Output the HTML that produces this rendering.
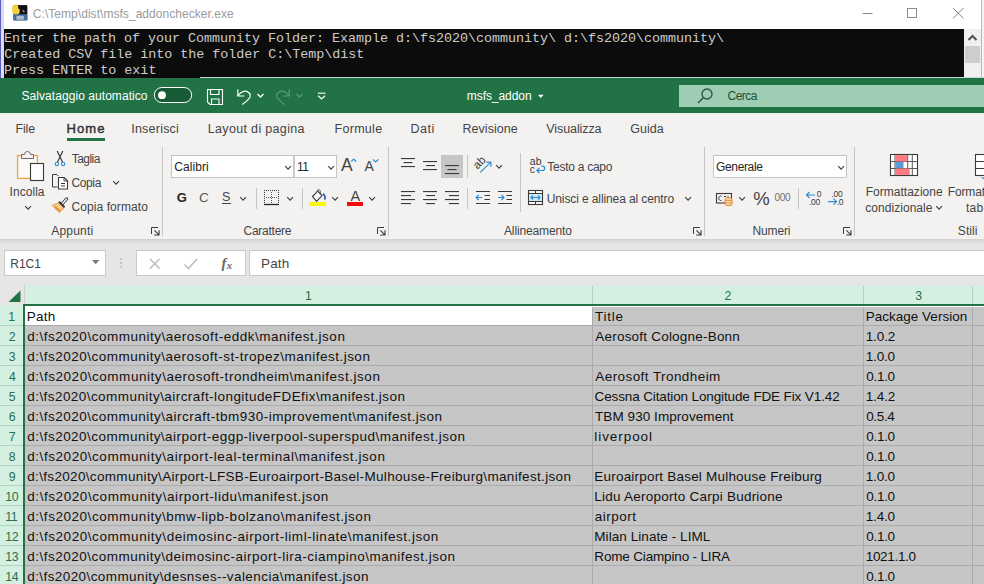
<!DOCTYPE html>
<html lang="it"><head><meta charset="utf-8"><title>msfs_addon - Excel</title>
<style>
html,body{margin:0;padding:0}
body{width:984px;height:584px;position:relative;overflow:hidden;background:#fff;font-family:"Liberation Sans",sans-serif}
.r{position:absolute;display:block}
.t{position:absolute;white-space:pre;line-height:40px;height:40px}
</style></head>
<body>
<div class="r" style="left:0px;top:0px;width:984px;height:29px;background:#ffffff;"></div>
<div class="r" style="left:0px;top:0px;width:1px;height:78px;background:#5c5eb6;"></div>
<div class="r" style="left:1px;top:0px;width:2px;height:78px;background:#dcdcfa;"></div>
<div class="r" style="left:3px;top:0px;width:1px;height:78px;background:#d6dada;"></div>
<svg class="r" style="left:12px;top:4px;" width="16" height="17" viewBox="0 0 16 17"><rect x="1.2" y="1.2" width="14.3" height="15.3" rx="1.2" fill="#3f6694"/>
<rect x="5" y="1.2" width="10" height="9" fill="#0f0f12"/>
<rect x="1.6" y="10.8" width="13.6" height="5.4" fill="#44709f"/>
<rect x="4.5" y="11.8" width="7.3" height="3.8" fill="#b4bccb"/>
<path d="M0.2 3.4q0-2.7 2.8-2.7h1.200q2.100 0 2.100 2.300v1.800h1.400v2.800q0 2.600-2.400 2.600h-2.300q-2.800 0-2.800-3z" fill="#f4cf3a"/>
<circle cx="7.6" cy="4.6" r="0.7" fill="#1c1c1c"/>
<rect x="10.3" y="5.8" width="1.2" height="1.2" fill="#9ab"/><rect x="11.3" y="7" width="1.2" height="1.3" fill="#cfd8e2"/></svg>
<span class="t" style="left:32.8px;top:-6px;font-size:12px;color:#9a9a9a;letter-spacing:0.045px;">C:\Temp\dist\msfs_addonchecker.exe</span>
<svg class="r" style="left:860px;top:6px;" width="110" height="16" viewBox="0 0 110 16"><path d="M2.5 7.500h10" stroke="#8a8a8a" stroke-width="1" fill="none"/>
<rect x="47.5" y="2.5" width="9" height="9" stroke="#8a8a8a" stroke-width="1" fill="none"/>
<path d="M93 2l10.5 10.500M103.5 2l-10.5 10.5" stroke="#8a8a8a" stroke-width="1" fill="none"/></svg>
<div class="r" style="left:4px;top:29px;width:960px;height:49px;background:#0c0c0c;"></div>
<span class="t" style="left:4.0px;top:19px;font-size:13.4px;color:#cccccc;font-family:'Liberation Mono', monospace;letter-spacing:-0.037px;">Enter the path of your Community Folder: Example d:\fs2020\community\ d:\fs2020\community\</span>
<span class="t" style="left:4.25px;top:35px;font-size:13.4px;color:#cccccc;font-family:'Liberation Mono', monospace;letter-spacing:-0.034px;">Created CSV file into the folder C:\Temp\dist</span>
<span class="t" style="left:4.0px;top:51px;font-size:13.4px;color:#cccccc;font-family:'Liberation Mono', monospace;letter-spacing:-0.014px;">Press ENTER to exit</span>
<div class="r" style="left:964px;top:29px;width:17px;height:49px;background:#f0f0f0;"></div>
<svg class="r" style="left:964px;top:29px;" width="17" height="17" viewBox="0 0 17 17"><path d="M4.5 11l4-4 4 4" stroke="#505050" stroke-width="2" fill="none"/></svg>
<div class="r" style="left:965px;top:46px;width:15px;height:17px;background:#cdcdcd;"></div>
<div class="r" style="left:981px;top:0px;width:1px;height:78px;background:#b8b8b8;"></div>
<div class="r" style="left:982px;top:0px;width:2px;height:78px;background:#f3f3f3;"></div>
<div class="r" style="left:0px;top:78px;width:984px;height:35px;background:#217346;"></div>
<div class="r" style="left:200px;top:77px;width:784px;height:1px;background:#c5d6cc;"></div>
<span class="t" style="left:21.5px;top:76px;font-size:12px;color:#ffffff;letter-spacing:0.06px;">Salvataggio automatico</span>
<svg class="r" style="left:153px;top:86px;" width="40" height="18" viewBox="0 0 40 18"><rect x="1.3" y="1.5" width="37.4" height="15" rx="7.5" fill="#185c37" stroke="#ffffff" stroke-width="1"/>
<circle cx="9" cy="9.2" r="3.9" fill="#ffffff"/></svg>
<svg class="r" style="left:206px;top:88px;" width="18" height="18" viewBox="0 0 18 18"><path d="M1.5 1.500h15v15h-12.500l-2.5-2.500z" fill="none" stroke="#fff" stroke-width="1.1"/>
<path d="M4.5 1.500v5h8.500v-5" fill="none" stroke="#fff" stroke-width="1.1"/>
<path d="M5.5 16.500v-5.500h7.500v5.5" fill="none" stroke="#fff" stroke-width="1.1"/></svg>
<svg class="r" style="left:236px;top:87px;" width="18" height="19" viewBox="0 0 18 19"><path d="M1.8 2.500v6.500h6.5" fill="none" stroke="#fff" stroke-width="1.2"/>
<path d="M2.2 8.600c3-4.5 8-5.8 11-2.6 2.7 3 0.3 6.5-7 11.5" fill="none" stroke="#fff" stroke-width="1.2"/></svg>
<svg class="r" style="left:256px;top:92px;" width="9" height="7" viewBox="0 0 9 7"><path d="M1.5 2l3 3 3-3" fill="none" stroke="#fff" stroke-width="1.3"/></svg>
<svg class="r" style="left:273px;top:87px;" width="18" height="19" viewBox="0 0 18 19"><path d="M16.2 2.500v6.500h-6.5" fill="none" stroke="#5a9976" stroke-width="1.2"/>
<path d="M15.8 8.600c-3-4.5-8-5.8-11-2.6-2.7 3-0.3 6.5 7 11.5" fill="none" stroke="#5a9976" stroke-width="1.2"/></svg>
<svg class="r" style="left:295px;top:92px;" width="9" height="7" viewBox="0 0 9 7"><path d="M1.5 2l3 3 3-3" fill="none" stroke="#5a9976" stroke-width="1.3"/></svg>
<svg class="r" style="left:316px;top:90px;" width="11" height="11" viewBox="0 0 11 11"><path d="M1.8 3.200h7.6" stroke="#fff" stroke-width="1.1"/><path d="M2.2 5.700l3.4 3.2 3.4-3.2" fill="none" stroke="#fff" stroke-width="1.2"/></svg>
<span class="t" style="left:466.75px;top:76px;font-size:12px;color:#ffffff;letter-spacing:-0.056px;">msfs_addon</span>
<svg class="r" style="left:537px;top:94px;" width="8" height="6" viewBox="0 0 8 6"><path d="M1 0.700h5.600l-2.8 3.200z" fill="#fff"/></svg>
<div class="r" style="left:679px;top:85px;width:305px;height:22px;background:#9fcdb4;"></div>
<svg class="r" style="left:696px;top:87px;" width="18" height="18" viewBox="0 0 18 18"><circle cx="11" cy="7" r="5" fill="none" stroke="#1e5c3a" stroke-width="1.3"/><path d="M7.5 10.500l-5.5 5.5" stroke="#1e5c3a" stroke-width="1.5"/></svg>
<span class="t" style="left:727.5px;top:76px;font-size:12px;color:#1b5234;letter-spacing:-0.5px;">Cerca</span>
<div class="r" style="left:0px;top:113px;width:984px;height:126px;background:#f3f2f1;"></div>
<div class="r" style="left:0px;top:113px;width:984px;height:1px;background:#e4f1e9;"></div>
<span class="t" style="left:15.5px;top:109px;font-size:12.5px;color:#444444;letter-spacing:-0.167px;">File</span>
<span class="t" style="left:66.5px;top:109px;font-size:13px;color:#333333;letter-spacing:1.1px;-webkit-text-stroke:0.45px #333333;">Home</span>
<span class="t" style="left:131.25px;top:109px;font-size:12.5px;color:#444444;letter-spacing:0.219px;">Inserisci</span>
<span class="t" style="left:207.8px;top:109px;font-size:12.5px;color:#444444;letter-spacing:0.33px;">Layout di pagina</span>
<span class="t" style="left:334.5px;top:109px;font-size:12.5px;color:#444444;letter-spacing:0.292px;">Formule</span>
<span class="t" style="left:410.5px;top:109px;font-size:12.5px;color:#444444;letter-spacing:0.5px;">Dati</span>
<span class="t" style="left:462.5px;top:109px;font-size:12.5px;color:#444444;letter-spacing:0.031px;">Revisione</span>
<span class="t" style="left:546.25px;top:109px;font-size:12.5px;color:#444444;letter-spacing:-0.083px;">Visualizza</span>
<span class="t" style="left:630.3px;top:109px;font-size:12.5px;color:#444444;letter-spacing:-0.012px;">Guida</span>
<div class="r" style="left:67px;top:138px;width:38px;height:3px;background:#217346;"></div>
<svg class="r" style="left:16px;top:150px;" width="30" height="32" viewBox="0 0 30 32"><rect x="1.6" y="5.6" width="19.8" height="22.8" fill="#fbfaf9" stroke="#eda43a" stroke-width="1.3"/>
<path d="M5.5 8.5v-4h3a3 3 0 0 1 6 0h3v4z" fill="#f6f5f4" stroke="#6b6967" stroke-width="1"/>
<rect x="14.5" y="13.5" width="13" height="17" fill="#fdfdfd" stroke="#3b3a39" stroke-width="1.1"/></svg>
<span class="t" style="left:9.6px;top:172px;font-size:12px;color:#444444;letter-spacing:0.042px;">Incolla</span>
<svg class="r" style="left:23.8px;top:205px;" width="9" height="6" viewBox="0 0 9 6"><path d="M1.2 1.2l2.9 2.9 2.9 -2.9" fill="none" stroke="#3b3b3b" stroke-width="1.1"/></svg>
<svg class="r" style="left:54px;top:150px;" width="12" height="17" viewBox="0 0 12 17"><path d="M3.2 1l5.4 11.3M8.8 1l-5.4 11.3" fill="none" stroke="#3b3a39" stroke-width="1.2"/>
<circle cx="2.9" cy="14" r="1.7" fill="none" stroke="#2e8bd0" stroke-width="1.1"/>
<circle cx="9.1" cy="14" r="1.7" fill="none" stroke="#2e8bd0" stroke-width="1.1"/></svg>
<span class="t" style="left:71.65px;top:139px;font-size:12px;color:#444444;letter-spacing:-0.51px;">Taglia</span>
<svg class="r" style="left:51px;top:173px;" width="18" height="18" viewBox="0 0 18 18"><path d="M6.5 14h-5v-12.5h4.2l1.5 1.5" fill="none" stroke="#3b3a39" stroke-width="1"/>
<path d="M7.5 4.5h5.7l3.3 3.3v8.2h-9z" fill="#ffffff" stroke="#3b3a39" stroke-width="1.1"/>
<path d="M13 4.7v3.3h3.3" fill="none" stroke="#3b3a39" stroke-width="0.9"/>
<path d="M10 10.5h4M10 13h4" stroke="#3b3a39" stroke-width="1"/></svg>
<span class="t" style="left:71.4px;top:163px;font-size:12px;color:#444444;letter-spacing:-0.35px;">Copia</span>
<svg class="r" style="left:111.9px;top:180px;" width="9" height="6" viewBox="0 0 9 6"><path d="M1.2 1.2l2.9 2.9 2.9 -2.9" fill="none" stroke="#3b3b3b" stroke-width="1.1"/></svg>
<svg class="r" style="left:51px;top:197px;" width="18" height="17" viewBox="0 0 18 17"><path d="M8.3 5.7l-7 2.7 6.7 7 2.6-2 2.5-2.7z" fill="#f9c98c" stroke="#ea9a3c" stroke-width="1"/>
<path d="M4 9.5l5.5 5" stroke="#ea8a2a" stroke-width="1.6"/>
<path d="M8 4.7l5.5 5.5" stroke="#3b3a39" stroke-width="2"/>
<path d="M11.5 6.5l4-4.5" stroke="#3b3a39" stroke-width="3.2" stroke-linecap="round"/>
<path d="M11.8 6.2l3.7-4.2" stroke="#ffffff" stroke-width="1.3" stroke-linecap="round"/></svg>
<span class="t" style="left:71.4px;top:187px;font-size:12px;color:#444444;letter-spacing:0.092px;">Copia formato</span>
<span class="t" style="left:51.2px;top:211px;font-size:12px;color:#444444;letter-spacing:0.217px;">Appunti</span>
<svg class="r" style="left:151px;top:227px;" width="9" height="9" viewBox="0 0 9 9"><path d="M0.5 7V0.5H7" fill="none" stroke="#3b3a39" stroke-width="1"/><path d="M3.4 3.4L7.7 7.7M8 3.2V8H3.2" fill="none" stroke="#3b3a39" stroke-width="1.1"/></svg>
<div class="r" style="left:162px;top:147px;width:1px;height:89px;background:#c8c6c4;"></div>
<div class="r" style="left:171px;top:155px;width:123px;height:23px;background:#ffffff;box-sizing:border-box;border:1px solid #c6c4c2"></div>
<div class="r" style="left:294px;top:155px;width:43px;height:23px;background:#ffffff;box-sizing:border-box;border:1px solid #c6c4c2;border-left-color:#d0cecc"></div>
<span class="t" style="left:174.25px;top:147px;font-size:12px;color:#262626;letter-spacing:0.083px;">Calibri</span>
<svg class="r" style="left:283.75px;top:165px;" width="9" height="6" viewBox="0 0 9 6"><path d="M1.2 1.2l2.9 2.9 2.9 -2.9" fill="none" stroke="#3b3b3b" stroke-width="1.1"/></svg>
<span class="t" style="left:296.9px;top:147px;font-size:12px;color:#262626;letter-spacing:-0.3px;">11</span>
<svg class="r" style="left:326.9px;top:165px;" width="9" height="6" viewBox="0 0 9 6"><path d="M1.2 1.2l2.9 2.9 2.9 -2.9" fill="none" stroke="#3b3b3b" stroke-width="1.1"/></svg>
<span class="t" style="left:341.0px;top:145px;font-size:17.5px;color:#444444;">A</span>
<svg class="r" style="left:350px;top:157px;" width="8" height="6" viewBox="0 0 8 6"><path d="M1.2 4.6l2.5-2.6 2.5 2.6" fill="none" stroke="#2e8bd0" stroke-width="1.2"/></svg>
<span class="t" style="left:364.6px;top:146px;font-size:14px;color:#444444;">A</span>
<svg class="r" style="left:372px;top:158px;" width="8" height="6" viewBox="0 0 8 6"><path d="M1 1.4l2.7 2.6 2.7-2.6" fill="none" stroke="#2e8bd0" stroke-width="1.2"/></svg>
<span class="t" style="left:176.75px;top:178px;font-size:13px;color:#262626;font-weight:700;">G</span>
<span class="t" style="left:199.0px;top:178px;font-size:13px;color:#505050;transform:skewX(-5deg);">C</span>
<span class="t" style="left:222.0px;top:177px;font-size:12.5px;color:#444444;">S</span>
<div class="r" style="left:222px;top:203px;width:8.5px;height:1px;background:#444444;"></div>
<svg class="r" style="left:239.4px;top:195.75px;" width="9" height="6" viewBox="0 0 9 6"><path d="M1.2 1.2l2.9 2.9 2.9 -2.9" fill="none" stroke="#3b3b3b" stroke-width="1.1"/></svg>
<div class="r" style="left:256px;top:188px;width:1px;height:21px;background:#c8c6c4;"></div>
<svg class="r" style="left:263px;top:189px;" width="17" height="17" viewBox="0 0 17 17"><path d="M1 1.5h15M1.5 1v14M15.5 1v14" fill="none" stroke="#3b3a39" stroke-width="1" stroke-dasharray="1 1"/>
<path d="M8.5 3v12M3 8.5h12" stroke="#5a5a5a" stroke-width="1" stroke-dasharray="1 1"/>
<path d="M1 15.5h15" stroke="#262626" stroke-width="1.3"/></svg>
<svg class="r" style="left:285.5px;top:195.75px;" width="9" height="6" viewBox="0 0 9 6"><path d="M1.2 1.2l2.9 2.9 2.9 -2.9" fill="none" stroke="#3b3b3b" stroke-width="1.1"/></svg>
<div class="r" style="left:302px;top:188px;width:1px;height:21px;background:#c8c6c4;"></div>
<svg class="r" style="left:308px;top:188px;" width="20" height="19" viewBox="0 0 20 19"><path d="M4.5 8.5l5.2-5.3 4.3 4.3-5.4 5.8z" fill="#fbfbfb" stroke="#3b3a39" stroke-width="1.1"/>
<path d="M9.3 4c-0.8-2.8 2.6-3.2 2.9-0.6v2.8" fill="none" stroke="#3b3a39" stroke-width="1"/>
<path d="M14.8 5.8c2.2 1.5 2.8 3.7 1.7 5.8" fill="none" stroke="#2a5db0" stroke-width="1.7"/>
<rect x="1" y="14" width="17.2" height="4" rx="0.8" fill="#fbf80a"/></svg>
<svg class="r" style="left:331.25px;top:195.75px;" width="9" height="6" viewBox="0 0 9 6"><path d="M1.2 1.2l2.9 2.9 2.9 -2.9" fill="none" stroke="#3b3b3b" stroke-width="1.1"/></svg>
<span class="t" style="left:350.6px;top:176px;font-size:14.5px;color:#444444;">A</span>
<div class="r" style="left:347px;top:202px;width:16px;height:4px;background:#f20d0d;"></div>
<svg class="r" style="left:368px;top:195.75px;" width="9" height="6" viewBox="0 0 9 6"><path d="M1.2 1.2l2.9 2.9 2.9 -2.9" fill="none" stroke="#3b3b3b" stroke-width="1.1"/></svg>
<span class="t" style="left:243.5px;top:211px;font-size:12px;color:#444444;letter-spacing:-0.25px;">Carattere</span>
<svg class="r" style="left:377px;top:227px;" width="9" height="9" viewBox="0 0 9 9"><path d="M0.5 7V0.5H7" fill="none" stroke="#3b3a39" stroke-width="1"/><path d="M3.4 3.4L7.7 7.7M8 3.2V8H3.2" fill="none" stroke="#3b3a39" stroke-width="1.1"/></svg>
<div class="r" style="left:388px;top:147px;width:1px;height:89px;background:#c8c6c4;"></div>
<svg class="r" style="left:401px;top:150px;" width="16" height="60" viewBox="0 0 16 60"><rect x="0" y="8" width="14" height="1.1" fill="#3b3a39"/><rect x="2.5" y="12" width="9.0" height="1.1" fill="#3b3a39"/><rect x="0" y="16" width="14" height="1.1" fill="#3b3a39"/></svg>
<svg class="r" style="left:423px;top:150px;" width="16" height="60" viewBox="0 0 16 60"><rect x="0" y="11" width="14" height="1.1" fill="#3b3a39"/><rect x="3" y="15" width="9" height="1.1" fill="#3b3a39"/><rect x="0" y="19" width="14" height="1.1" fill="#3b3a39"/></svg>
<div class="r" style="left:441px;top:155px;width:22px;height:23px;background:#c8c6c4;"></div>
<svg class="r" style="left:445px;top:150px;" width="16" height="60" viewBox="0 0 16 60"><rect x="0" y="15" width="14" height="1.1" fill="#3b3a39"/><rect x="2.5" y="19" width="9.0" height="1.1" fill="#3b3a39"/><rect x="0" y="23" width="14" height="1.1" fill="#3b3a39"/></svg>
<div class="r" style="left:467px;top:155px;width:1px;height:23px;background:#c8c6c4;"></div>
<svg class="r" style="left:472px;top:154px;" width="22" height="22" viewBox="0 0 22 22"><text x="0" y="0" text-anchor="middle" font-family="Liberation Sans, sans-serif" font-size="11.5" fill="#3b3a39" transform="translate(9.9 11.3) rotate(-45)">ab</text>
<path d="M8.2 18.4l10.2-9.8M14.3 8.2h4.5v4.5" fill="none" stroke="#3c8fd0" stroke-width="1.3"/></svg>
<svg class="r" style="left:494.6px;top:164px;" width="9" height="6" viewBox="0 0 9 6"><path d="M1.2 1.2l2.9 2.9 2.9 -2.9" fill="none" stroke="#3b3b3b" stroke-width="1.1"/></svg>
<svg class="r" style="left:401px;top:150px;" width="16" height="60" viewBox="0 0 16 60"><rect x="0" y="41" width="14" height="1.1" fill="#3b3a39"/><rect x="0" y="45" width="10" height="1.1" fill="#3b3a39"/><rect x="0" y="49" width="14" height="1.1" fill="#3b3a39"/><rect x="0" y="53" width="10" height="1.1" fill="#3b3a39"/></svg>
<svg class="r" style="left:423px;top:150px;" width="16" height="60" viewBox="0 0 16 60"><rect x="0" y="41" width="14" height="1.1" fill="#3b3a39"/><rect x="3" y="45" width="9" height="1.1" fill="#3b3a39"/><rect x="0" y="49" width="14" height="1.1" fill="#3b3a39"/><rect x="3" y="53" width="9" height="1.1" fill="#3b3a39"/></svg>
<svg class="r" style="left:445px;top:150px;" width="16" height="60" viewBox="0 0 16 60"><rect x="0" y="41" width="14" height="1.1" fill="#3b3a39"/><rect x="4" y="45" width="10" height="1.1" fill="#3b3a39"/><rect x="0" y="49" width="14" height="1.1" fill="#3b3a39"/><rect x="4" y="53" width="10" height="1.1" fill="#3b3a39"/></svg>
<div class="r" style="left:467px;top:188px;width:1px;height:21px;background:#c8c6c4;"></div>
<svg class="r" style="left:475px;top:189px;" width="16" height="17" viewBox="0 0 16 17"><path d="M1 2.5h14M1 14.5h14M9.5 6.5h5.5M9.5 10.5h5.5" stroke="#3b3a39" stroke-width="1.1"/>
<path d="M1.2 8.5h6M3.7 6l-2.5 2.5 2.5 2.5" fill="none" stroke="#2e8bd0" stroke-width="1.2"/></svg>
<svg class="r" style="left:497px;top:189px;" width="16" height="17" viewBox="0 0 16 17"><path d="M1 2.5h14M1 14.5h14M9.5 6.5h5.5M9.5 10.5h5.5" stroke="#3b3a39" stroke-width="1.1"/>
<path d="M1 8.5h6M4.5 6l2.5 2.5-2.5 2.5" fill="none" stroke="#2e8bd0" stroke-width="1.2"/></svg>
<div class="r" style="left:520px;top:153px;width:1px;height:59px;background:#c8c6c4;"></div>
<svg class="r" style="left:529px;top:156px;" width="17" height="19" viewBox="0 0 17 19"><text x="0.8" y="9.3" font-family="Liberation Sans, sans-serif" font-size="10.5" fill="#3b3a39">ab</text>
<text x="0.8" y="16.5" font-family="Liberation Sans, sans-serif" font-size="10.5" fill="#3b3a39">c</text>
<path d="M8 14.5h5.5a2.2 2.2 0 0 0 0-4.4h-1" fill="none" stroke="#2e8bd0" stroke-width="1.2"/>
<path d="M10.5 12l-2.7 2.5 2.7 2.5" fill="none" stroke="#2e8bd0" stroke-width="1.2"/></svg>
<span class="t" style="left:547.25px;top:147px;font-size:12px;color:#444444;letter-spacing:-0.259px;">Testo a capo</span>
<svg class="r" style="left:527px;top:189px;" width="17" height="17" viewBox="0 0 17 17"><rect x="1.5" y="1.5" width="14" height="14" fill="#fafafa" stroke="#3b3a39" stroke-width="1.1"/>
<rect x="2" y="4.5" width="13" height="8" fill="#cfe6f7"/>
<path d="M1.5 4.5h14M1.5 12.5h14M8.5 1.5v3M8.5 12.5v3" stroke="#3b3a39" stroke-width="1"/>
<path d="M4 8.5h9M6 6.5l-2 2 2 2M11 6.5l2 2-2 2" fill="none" stroke="#2e8bd0" stroke-width="1.1"/></svg>
<span class="t" style="left:546.75px;top:179px;font-size:12px;color:#444444;letter-spacing:-0.11px;">Unisci e allinea al centro</span>
<svg class="r" style="left:683.5px;top:195.75px;" width="9" height="6" viewBox="0 0 9 6"><path d="M1.2 1.2l2.9 2.9 2.9 -2.9" fill="none" stroke="#3b3b3b" stroke-width="1.1"/></svg>
<span class="t" style="left:504.0px;top:211px;font-size:12px;color:#444444;letter-spacing:-0.136px;">Allineamento</span>
<svg class="r" style="left:693px;top:227px;" width="9" height="9" viewBox="0 0 9 9"><path d="M0.5 7V0.5H7" fill="none" stroke="#3b3a39" stroke-width="1"/><path d="M3.4 3.4L7.7 7.7M8 3.2V8H3.2" fill="none" stroke="#3b3a39" stroke-width="1.1"/></svg>
<div class="r" style="left:704px;top:147px;width:1px;height:89px;background:#c8c6c4;"></div>
<div class="r" style="left:713px;top:155px;width:134px;height:23px;background:#ffffff;box-sizing:border-box;border:1px solid #c6c4c2"></div>
<span class="t" style="left:716.1px;top:147px;font-size:12px;color:#262626;letter-spacing:-0.371px;">Generale</span>
<svg class="r" style="left:836.5px;top:165px;" width="9" height="6" viewBox="0 0 9 6"><path d="M1.2 1.2l2.9 2.9 2.9 -2.9" fill="none" stroke="#3b3b3b" stroke-width="1.1"/></svg>
<svg class="r" style="left:715px;top:192px;" width="19" height="15" viewBox="0 0 19 15"><rect x="1.5" y="1.5" width="15" height="9.5" fill="#f3f2f1" stroke="#3b3a39" stroke-width="1.1"/>
<path d="M6.5 4a2.3 2.3 0 1 0 0 4.5" fill="none" stroke="#3b3a39" stroke-width="1"/><path d="M9 4.5h2M13 4v4" stroke="#3b3a39" stroke-width="1"/>
<rect x="10" y="5.8" width="7" height="7.8" rx="2" fill="#f9d9b0" stroke="#e8892b" stroke-width="1"/>
<path d="M10 8.4h7M10 11h7" stroke="#e8892b" stroke-width="0.9"/></svg>
<svg class="r" style="left:737.5px;top:195.75px;" width="9" height="6" viewBox="0 0 9 6"><path d="M1.2 1.2l2.9 2.9 2.9 -2.9" fill="none" stroke="#3b3b3b" stroke-width="1.1"/></svg>
<span class="t" style="left:753.25px;top:179px;font-size:18.5px;color:#444444;">%</span>
<span class="t" style="left:774.5px;top:178px;font-size:10px;color:#6e6e6e;letter-spacing:-0.35px;">000</span>
<div class="r" style="left:798px;top:188px;width:1px;height:21px;background:#c8c6c4;"></div>
<svg class="r" style="left:805px;top:189px;" width="18" height="18" viewBox="0 0 18 18"><path d="M1.5 6h8.5M4.5 3l-3 3 3 3" fill="none" stroke="#2e8bd0" stroke-width="1.2"/>
<text x="11.8" y="7.5" font-family="Liberation Sans, sans-serif" font-size="8.5" fill="#3b3a39">0</text>
<text x="4" y="16" font-family="Liberation Sans, sans-serif" font-size="8.5" fill="#3b3a39" letter-spacing="-0.3">.00</text></svg>
<svg class="r" style="left:827px;top:189px;" width="18" height="18" viewBox="0 0 18 18"><text x="4.5" y="7.5" font-family="Liberation Sans, sans-serif" font-size="8.5" fill="#3b3a39" letter-spacing="-0.3">.00</text>
<path d="M1 12.7h8.5M6.5 9.7l3 3-3 3" fill="none" stroke="#2e8bd0" stroke-width="1.2"/>
<text x="9.7" y="16" font-family="Liberation Sans, sans-serif" font-size="8.5" fill="#3b3a39" letter-spacing="-0.3">.0</text></svg>
<span class="t" style="left:752.5px;top:211px;font-size:12px;color:#444444;letter-spacing:-0.15px;">Numeri</span>
<svg class="r" style="left:843px;top:227px;" width="9" height="9" viewBox="0 0 9 9"><path d="M0.5 7V0.5H7" fill="none" stroke="#3b3a39" stroke-width="1"/><path d="M3.4 3.4L7.7 7.7M8 3.2V8H3.2" fill="none" stroke="#3b3a39" stroke-width="1.1"/></svg>
<div class="r" style="left:854px;top:147px;width:1px;height:89px;background:#c8c6c4;"></div>
<svg class="r" style="left:889px;top:153px;" width="30" height="24" viewBox="0 0 30 24"><rect x="1.5" y="1.5" width="27" height="21" fill="#ffffff" stroke="#3b3a39" stroke-width="1.1"/>
<path d="M6 1.5v21M18.7 1.5v21M23.3 1.5v21M1.5 8.5h27M1.5 15.5h27" stroke="#4a4a4a" stroke-width="0.9"/>
<rect x="6.5" y="2.1" width="11.7" height="6.4" fill="#fb7b80"/>
<rect x="6.5" y="9" width="8" height="6" fill="#5b9bd5"/>
<rect x="6.5" y="15.5" width="14.2" height="6.4" fill="#fb7b80"/></svg>
<span class="t" style="left:865.7px;top:172px;font-size:12px;color:#444444;letter-spacing:0.021px;">Formattazione</span>
<span class="t" style="left:865.3px;top:188px;font-size:12px;color:#444444;letter-spacing:0.041px;">condizionale</span>
<svg class="r" style="left:934.8px;top:205px;" width="9" height="6" viewBox="0 0 9 6"><path d="M1.2 1.2l2.9 2.9 2.9 -2.9" fill="none" stroke="#3b3b3b" stroke-width="1.1"/></svg>
<svg class="r" style="left:974px;top:153px;" width="10" height="28" viewBox="0 0 10 28"><rect x="1.5" y="1.5" width="20" height="21" fill="#ffffff" stroke="#3b3a39" stroke-width="1.1"/>
<path d="M1.5 8.5h20M1.5 15.5h20" stroke="#3b3a39" stroke-width="1"/>
<path d="M6.5 24.5l3.5 1.8v-1.8z" fill="#2e8bd0"/></svg>
<span class="t" style="left:947.7px;top:172px;font-size:12px;color:#444444;letter-spacing:-0.121px;">Formatta come</span>
<span class="t" style="left:966.05px;top:188px;font-size:12px;color:#444444;letter-spacing:0.242px;">tabella</span>
<span class="t" style="left:957.8px;top:211px;font-size:12px;color:#444444;letter-spacing:0.1px;">Stili</span>
<div class="r" style="left:0;top:239px;width:984px;height:6px;background:linear-gradient(#d0d0d0,#dddddd 40%,#e6e6e6)"></div>
<div class="r" style="left:0px;top:244px;width:984px;height:41px;background:#e6e6e6;"></div>
<div class="r" style="left:4px;top:250px;width:102px;height:26px;background:#ffffff;box-sizing:border-box;border:1px solid #c9c9c9"></div>
<span class="t" style="left:10.3px;top:244px;font-size:12px;color:#444444;letter-spacing:-0.017px;">R1C1</span>
<svg class="r" style="left:91px;top:259px;" width="10" height="7" viewBox="0 0 10 7"><path d="M1 1h7.400l-3.7 4.300z" fill="#777777"/></svg>
<svg class="r" style="left:119px;top:257px;" width="4" height="12" viewBox="0 0 4 12"><rect x="1.2" y="1.5" width="1.6" height="1.6" fill="#b5b5b5"/><rect x="1.2" y="5.3" width="1.6" height="1.6" fill="#b5b5b5"/><rect x="1.2" y="9" width="1.6" height="1.6" fill="#b5b5b5"/></svg>
<div class="r" style="left:136px;top:250px;width:110px;height:26px;background:#ffffff;box-sizing:border-box;border:1px solid #c9c9c9"></div>
<svg class="r" style="left:148px;top:257px;" width="14" height="13" viewBox="0 0 14 13"><path d="M2 2l9.5 9.500M11.5 2l-9.5 9.5" stroke="#bdbdbd" stroke-width="1.6" fill="none"/></svg>
<svg class="r" style="left:183px;top:257px;" width="16" height="13" viewBox="0 0 16 13"><path d="M1.5 7.500l4 4 8.5-9.5" stroke="#bdbdbd" stroke-width="1.6" fill="none"/></svg>
<span class="t" style="left:221.5px;top:243px;font-size:14.5px;color:#666666;font-family:'Liberation Serif', serif;font-weight:700;font-style:italic;">f</span>
<span class="t" style="left:226.8px;top:246px;font-size:10.5px;color:#666666;font-family:'Liberation Serif', serif;font-weight:700;font-style:italic;">x</span>
<div class="r" style="left:249px;top:250px;width:740px;height:26px;background:#ffffff;box-sizing:border-box;border:1px solid #c9c9c9"></div>
<span class="t" style="left:261.0px;top:244px;font-size:13.5px;color:#444444;letter-spacing:0.167px;">Path</span>
<div class="r" style="left:0px;top:285px;width:24px;height:20px;background:#e6e6e6;"></div>
<svg class="r" style="left:8px;top:290px;" width="13" height="13" viewBox="0 0 13 13"><path d="M12.5 0.500v11.500h-12z" fill="#217346"/></svg>
<div class="r" style="left:25px;top:285px;width:959px;height:19px;background:#d3f0e0;"></div>
<div class="r" style="left:25px;top:284px;width:959px;height:3px;background:linear-gradient(#e6e6e6,#d3f0e0)"></div>
<div class="r" style="left:24px;top:285px;width:1px;height:19px;background:#cfcfcf;"></div>
<div class="r" style="left:592px;top:286px;width:1px;height:18px;background:#b9cfc3;"></div>
<div class="r" style="left:863px;top:286px;width:1px;height:18px;background:#b9cfc3;"></div>
<div class="r" style="left:972px;top:286px;width:1px;height:18px;background:#b9cfc3;"></div>
<span class="t" style="left:305.0px;top:276px;font-size:12.3px;color:#2a6e4b;">1</span>
<span class="t" style="left:724.5px;top:276px;font-size:12.3px;color:#2a6e4b;">2</span>
<span class="t" style="left:915.3px;top:276px;font-size:12.3px;color:#2a6e4b;">3</span>
<div class="r" style="left:0px;top:305px;width:24px;height:279px;background:#d3f0e0;"></div>
<div class="r" style="left:25px;top:306px;width:959px;height:278px;background:#c6c6c6;"></div>
<div class="r" style="left:26px;top:306px;width:566px;height:19px;background:#ffffff;"></div>
<div class="r" style="left:25px;top:325px;width:959px;height:1px;background:#ababab;"></div>
<div class="r" style="left:0px;top:325px;width:23px;height:1px;background:#b5d3c3;"></div>
<div class="r" style="left:25px;top:345px;width:959px;height:1px;background:#ababab;"></div>
<div class="r" style="left:0px;top:345px;width:23px;height:1px;background:#b5d3c3;"></div>
<div class="r" style="left:25px;top:365px;width:959px;height:1px;background:#ababab;"></div>
<div class="r" style="left:0px;top:365px;width:23px;height:1px;background:#b5d3c3;"></div>
<div class="r" style="left:25px;top:385px;width:959px;height:1px;background:#ababab;"></div>
<div class="r" style="left:0px;top:385px;width:23px;height:1px;background:#b5d3c3;"></div>
<div class="r" style="left:25px;top:405px;width:959px;height:1px;background:#ababab;"></div>
<div class="r" style="left:0px;top:405px;width:23px;height:1px;background:#b5d3c3;"></div>
<div class="r" style="left:25px;top:425px;width:959px;height:1px;background:#ababab;"></div>
<div class="r" style="left:0px;top:425px;width:23px;height:1px;background:#b5d3c3;"></div>
<div class="r" style="left:25px;top:445px;width:959px;height:1px;background:#ababab;"></div>
<div class="r" style="left:0px;top:445px;width:23px;height:1px;background:#b5d3c3;"></div>
<div class="r" style="left:25px;top:465px;width:959px;height:1px;background:#ababab;"></div>
<div class="r" style="left:0px;top:465px;width:23px;height:1px;background:#b5d3c3;"></div>
<div class="r" style="left:25px;top:485px;width:959px;height:1px;background:#ababab;"></div>
<div class="r" style="left:0px;top:485px;width:23px;height:1px;background:#b5d3c3;"></div>
<div class="r" style="left:25px;top:505px;width:959px;height:1px;background:#ababab;"></div>
<div class="r" style="left:0px;top:505px;width:23px;height:1px;background:#b5d3c3;"></div>
<div class="r" style="left:25px;top:525px;width:959px;height:1px;background:#ababab;"></div>
<div class="r" style="left:0px;top:525px;width:23px;height:1px;background:#b5d3c3;"></div>
<div class="r" style="left:25px;top:545px;width:959px;height:1px;background:#ababab;"></div>
<div class="r" style="left:0px;top:545px;width:23px;height:1px;background:#b5d3c3;"></div>
<div class="r" style="left:25px;top:565px;width:959px;height:1px;background:#ababab;"></div>
<div class="r" style="left:0px;top:565px;width:23px;height:1px;background:#b5d3c3;"></div>
<div class="r" style="left:25px;top:585px;width:959px;height:1px;background:#ababab;"></div>
<div class="r" style="left:0px;top:585px;width:23px;height:1px;background:#b5d3c3;"></div>
<div class="r" style="left:592px;top:306px;width:1px;height:278px;background:#ababab;"></div>
<div class="r" style="left:863px;top:306px;width:1px;height:278px;background:#ababab;"></div>
<div class="r" style="left:972px;top:306px;width:1px;height:278px;background:#ababab;"></div>
<div class="r" style="left:23px;top:304px;width:961px;height:2px;background:#217346;"></div>
<div class="r" style="left:23px;top:304px;width:2px;height:280px;background:#217346;"></div>
<div class="r" style="left:25px;top:306px;width:959px;height:1px;background:#ffffff;"></div>
<div class="r" style="left:25px;top:306px;width:1px;height:19px;background:#ffffff;"></div>
<span class="t" style="left:8.25px;top:297px;font-size:12.3px;color:#2a6e4b;letter-spacing:-0.3px;">1</span>
<span class="t" style="left:26.75px;top:297px;font-size:13.5px;color:#111111;letter-spacing:0.217px;">Path</span>
<span class="t" style="left:595.05px;top:297px;font-size:13.5px;color:#111111;letter-spacing:0.738px;">Title</span>
<span class="t" style="left:865.7px;top:297px;font-size:13.5px;color:#111111;letter-spacing:0.014px;">Package Version</span>
<span class="t" style="left:8.75px;top:317px;font-size:12.3px;color:#2a6e4b;letter-spacing:-0.3px;">2</span>
<span class="t" style="left:27.25px;top:317px;font-size:13.5px;color:#111111;letter-spacing:0.511px;">d:\fs2020\community\aerosoft-eddk\manifest.json</span>
<span class="t" style="left:595.3px;top:317px;font-size:13.5px;color:#111111;letter-spacing:0.21px;">Aerosoft Cologne-Bonn</span>
<span class="t" style="left:865.7px;top:317px;font-size:13.5px;color:#111111;letter-spacing:-0.088px;">1.0.2</span>
<span class="t" style="left:8.75px;top:337px;font-size:12.3px;color:#2a6e4b;letter-spacing:-0.3px;">3</span>
<span class="t" style="left:27.25px;top:337px;font-size:13.5px;color:#111111;letter-spacing:0.495px;">d:\fs2020\community\aerosoft-st-tropez\manifest.json</span>
<span class="t" style="left:865.7px;top:337px;font-size:13.5px;color:#111111;letter-spacing:-0.15px;">1.0.0</span>
<span class="t" style="left:9.0px;top:357px;font-size:12.3px;color:#2a6e4b;letter-spacing:-0.3px;">4</span>
<span class="t" style="left:27.25px;top:357px;font-size:13.5px;color:#111111;letter-spacing:0.544px;">d:\fs2020\community\aerosoft-trondheim\manifest.json</span>
<span class="t" style="left:595.3px;top:357px;font-size:13.5px;color:#111111;letter-spacing:0.424px;">Aerosoft Trondheim</span>
<span class="t" style="left:866.2px;top:357px;font-size:13.5px;color:#111111;letter-spacing:-0.275px;">0.1.0</span>
<span class="t" style="left:8.75px;top:377px;font-size:12.3px;color:#2a6e4b;letter-spacing:-0.3px;">5</span>
<span class="t" style="left:27.25px;top:377px;font-size:13.5px;color:#111111;letter-spacing:0.439px;">d:\fs2020\community\aircraft-longitudeFDEfix\manifest.json</span>
<span class="t" style="left:594.55px;top:377px;font-size:13.5px;color:#111111;letter-spacing:-0.126px;">Cessna Citation Longitude FDE Fix V1.42</span>
<span class="t" style="left:865.7px;top:377px;font-size:13.5px;color:#111111;letter-spacing:-0.088px;">1.4.2</span>
<span class="t" style="left:8.75px;top:397px;font-size:12.3px;color:#2a6e4b;letter-spacing:-0.3px;">6</span>
<span class="t" style="left:27.25px;top:397px;font-size:13.5px;color:#111111;letter-spacing:0.496px;">d:\fs2020\community\aircraft-tbm930-improvement\manifest.json</span>
<span class="t" style="left:595.05px;top:397px;font-size:13.5px;color:#111111;letter-spacing:0.067px;">TBM 930 Improvement</span>
<span class="t" style="left:866.2px;top:397px;font-size:13.5px;color:#111111;letter-spacing:-0.338px;">0.5.4</span>
<span class="t" style="left:8.75px;top:417px;font-size:12.3px;color:#2a6e4b;letter-spacing:-0.3px;">7</span>
<span class="t" style="left:27.25px;top:417px;font-size:13.5px;color:#111111;letter-spacing:0.477px;">d:\fs2020\community\airport-eggp-liverpool-superspud\manifest.json</span>
<span class="t" style="left:594.3px;top:417px;font-size:13.5px;color:#111111;letter-spacing:0.931px;">liverpool</span>
<span class="t" style="left:866.2px;top:417px;font-size:13.5px;color:#111111;letter-spacing:-0.275px;">0.1.0</span>
<span class="t" style="left:8.75px;top:437px;font-size:12.3px;color:#2a6e4b;letter-spacing:-0.3px;">8</span>
<span class="t" style="left:27.25px;top:437px;font-size:13.5px;color:#111111;letter-spacing:0.551px;">d:\fs2020\community\airport-leal-terminal\manifest.json</span>
<span class="t" style="left:866.2px;top:437px;font-size:13.5px;color:#111111;letter-spacing:-0.275px;">0.1.0</span>
<span class="t" style="left:8.75px;top:457px;font-size:12.3px;color:#2a6e4b;letter-spacing:-0.3px;">9</span>
<span class="t" style="left:27.25px;top:457px;font-size:13.5px;color:#111111;letter-spacing:0.33px;">d:\fs2020\community\Airport-LFSB-Euroairport-Basel-Mulhouse-Freiburg\manifest.json</span>
<span class="t" style="left:594.3px;top:457px;font-size:13.5px;color:#111111;letter-spacing:0.204px;">Euroairport Basel Mulhouse Freiburg</span>
<span class="t" style="left:865.7px;top:457px;font-size:13.5px;color:#111111;letter-spacing:-0.15px;">1.0.0</span>
<span class="t" style="left:5.2px;top:477px;font-size:12.3px;color:#2a6e4b;letter-spacing:-0.3px;">10</span>
<span class="t" style="left:27.25px;top:477px;font-size:13.5px;color:#111111;letter-spacing:0.572px;">d:\fs2020\community\airport-lidu\manifest.json</span>
<span class="t" style="left:594.3px;top:477px;font-size:13.5px;color:#111111;letter-spacing:0.239px;">Lidu Aeroporto Carpi Budrione</span>
<span class="t" style="left:866.2px;top:477px;font-size:13.5px;color:#111111;letter-spacing:-0.275px;">0.1.0</span>
<span class="t" style="left:5.2px;top:497px;font-size:12.3px;color:#2a6e4b;letter-spacing:-0.3px;">11</span>
<span class="t" style="left:27.25px;top:497px;font-size:13.5px;color:#111111;letter-spacing:0.536px;">d:\fs2020\community\bmw-lipb-bolzano\manifest.json</span>
<span class="t" style="left:594.8px;top:497px;font-size:13.5px;color:#111111;letter-spacing:0.492px;">airport</span>
<span class="t" style="left:865.7px;top:497px;font-size:13.5px;color:#111111;letter-spacing:-0.15px;">1.4.0</span>
<span class="t" style="left:5.2px;top:517px;font-size:12.3px;color:#2a6e4b;letter-spacing:-0.3px;">12</span>
<span class="t" style="left:27.25px;top:517px;font-size:13.5px;color:#111111;letter-spacing:0.556px;">d:\fs2020\community\deimosinc-airport-liml-linate\manifest.json</span>
<span class="t" style="left:594.3px;top:517px;font-size:13.5px;color:#111111;letter-spacing:0.067px;">Milan Linate - LIML</span>
<span class="t" style="left:866.2px;top:517px;font-size:13.5px;color:#111111;letter-spacing:-0.275px;">0.1.0</span>
<span class="t" style="left:5.2px;top:537px;font-size:12.3px;color:#2a6e4b;letter-spacing:-0.3px;">13</span>
<span class="t" style="left:27.25px;top:537px;font-size:13.5px;color:#111111;letter-spacing:0.492px;">d:\fs2020\community\deimosinc-airport-lira-ciampino\manifest.json</span>
<span class="t" style="left:594.3px;top:537px;font-size:13.5px;color:#111111;letter-spacing:-0.161px;">Rome Ciampino - LIRA</span>
<span class="t" style="left:865.7px;top:537px;font-size:13.5px;color:#111111;letter-spacing:-0.314px;">1021.1.0</span>
<span class="t" style="left:5.2px;top:557px;font-size:12.3px;color:#2a6e4b;letter-spacing:-0.3px;">14</span>
<span class="t" style="left:27.25px;top:557px;font-size:13.5px;color:#111111;letter-spacing:0.415px;">d:\fs2020\community\desnses--valencia\manifest.json</span>
<span class="t" style="left:866.2px;top:557px;font-size:13.5px;color:#111111;letter-spacing:-0.275px;">0.1.0</span>
</body></html>
